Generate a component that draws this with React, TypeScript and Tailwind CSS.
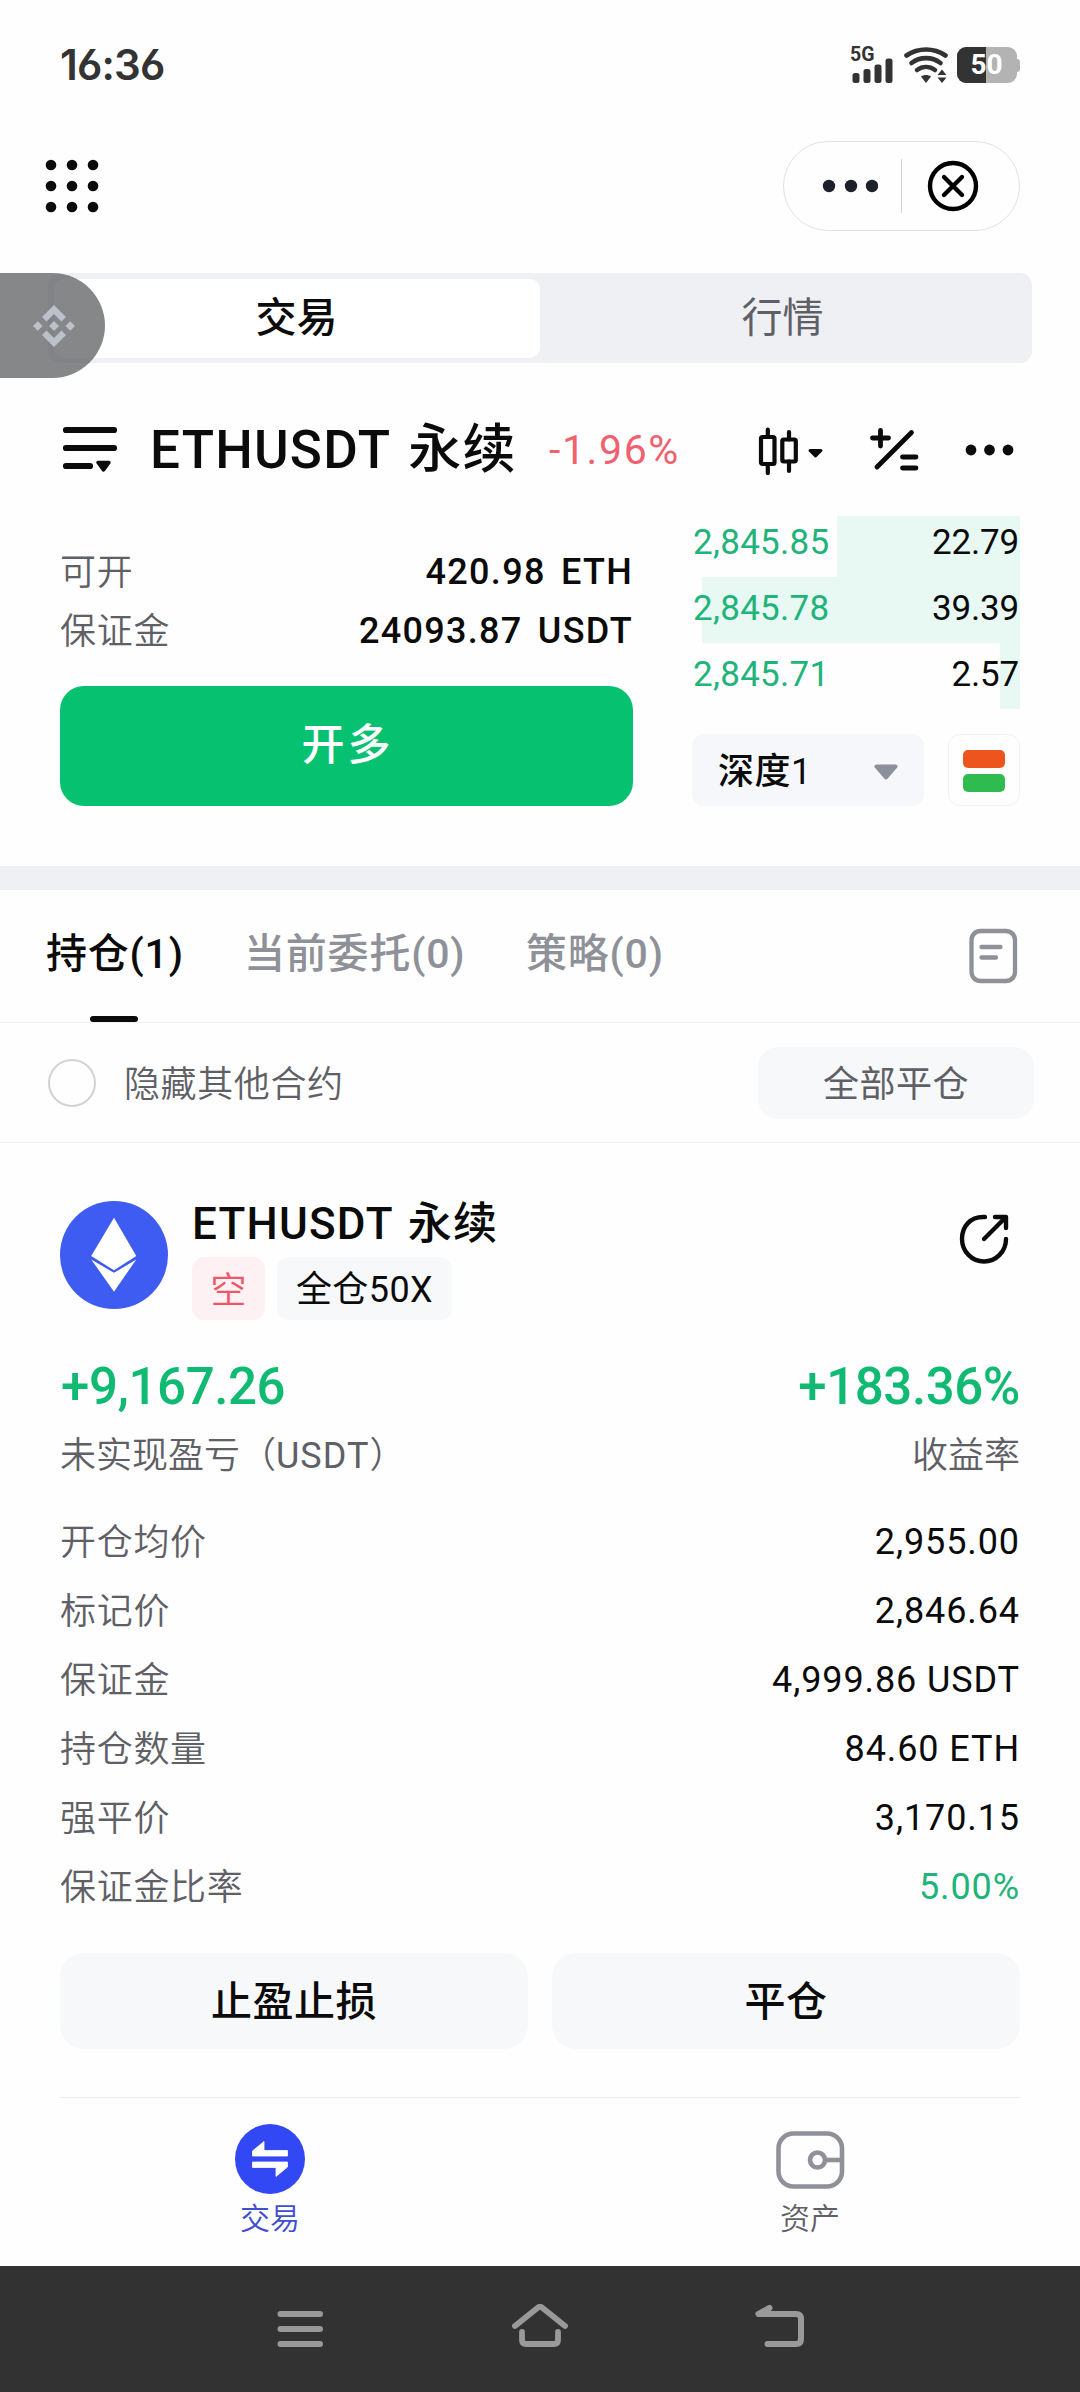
import type { ReactNode } from "react";

const bids = [
  { price: "2,845.85", amount: "22.79", bar: "w-[183px]" },
  { price: "2,845.78", amount: "39.39", bar: "w-[318px]" },
  { price: "2,845.71", amount: "2.57", bar: "w-[20px]" },
];

const details = [
  { label: "开仓均价", value: "2,955.00" },
  { label: "标记价", value: "2,846.64" },
  { label: "保证金", value: "4,999.86 USDT" },
  { label: "持仓数量", value: "84.60 ETH" },
  { label: "强平价", value: "3,170.15" },
  { label: "保证金比率", value: "5.00%", green: true },
];

// latin letters and figures
const latin = "font-['Roboto','Noto_Sans_CJK_SC',sans-serif]";

const StatusBar = () => (
  <div className="flex h-[130px] items-center justify-between pl-[60px] pr-[60px] text-[#333333]">
    <span className="text-[42px] leading-none font-semibold tracking-[-0.8px]">16:36</span>
    <div className="flex items-end">
      <div className="relative h-9 w-[46px]">
        <span className={`absolute top-0 left-0 text-[19.5px] leading-[15px] font-bold ${latin}`}>5G</span>
        <svg className="absolute inset-0" width="46" height="36" viewBox="0 0 46 36" fill="currentColor">
          <rect x="2.5" y="26" width="7" height="10" rx="2.5" />
          <rect x="13.5" y="22" width="7" height="14" rx="2.5" />
          <rect x="24.5" y="17.5" width="7" height="18.5" rx="2.5" />
          <rect x="35.5" y="11.5" width="7" height="24.5" rx="2.5" />
        </svg>
      </div>
      <svg className="ml-[8px]" width="44" height="36" viewBox="0 0 44 36" fill="none" stroke="currentColor" strokeWidth="4.6" strokeLinecap="round">
        <path d="M2.5 8.5C14 0.500 30 0.500 41.5 8.5" />
        <path d="M7.5 16C16 9.5 28 9.5 36.5 16" />
        <path d="M13 23C18.5 19 25.5 19 31 23" />
        <path d="M17 29.500C20 27.500 24 27.500 27 29.500L22 36Z" fill="currentColor" stroke="none" />
        <path d="M38 22.5L42.5 28H33.5ZM38 36L42.5 30.5H33.5Z" fill="currentColor" stroke="none" />
      </svg>
      <div className="relative ml-[9px] flex h-9 w-[63px] items-center">
        <div className="flex h-9 w-[60px] overflow-hidden rounded-[9px] bg-[#b3b3b3]">
          <div className="h-9 w-[29px] bg-[#333333]" />
        </div>
        <div className="h-[13px] w-[3px] rounded-r-sm bg-[#b3b3b3]" />
        <span className={`absolute left-0 w-[59px] text-center text-[28px] leading-9 font-bold ${latin} text-white`}>50</span>
      </div>
    </div>
  </div>
);

const AppHeader = () => (
  <div className="flex h-[112px] items-center justify-between pl-[45px] pr-[60px]">
    <svg width="54" height="54" viewBox="0 0 54 54" fill="#0b0b0b">
      {[6, 27, 48].map((y) => [6, 27, 48].map((x) => <circle key={`${x}-${y}`} cx={x} cy={y} r="5.3" />))}
    </svg>
    <div className="flex h-[90px] w-[237px] items-center rounded-full border border-[#e2e2e2]">
      <svg className="ml-[38px]" width="56" height="14" viewBox="0 0 56 14" fill="#1b202a">
        <circle cx="7" cy="7" r="6.2" />
        <circle cx="29" cy="7" r="6.2" />
        <circle cx="50" cy="7" r="6.2" />
      </svg>
      <div className="ml-[23px] h-[54px] w-px bg-[#d4d4d4]" />
      <svg className="ml-[25px]" width="52" height="52" viewBox="0 0 52 52" fill="none" stroke="#000000" strokeWidth="4.4" strokeLinecap="round">
        <circle cx="26" cy="26" r="23" />
        <path d="M17 17L35 35M35 17L17 35" />
      </svg>
    </div>
  </div>
);

const Segmented = () => (
  <div className="relative mt-[31px]">
    <div className="mx-12 flex h-[90px] rounded-xl bg-[#eff0f4] p-[5.5px] text-[41px] leading-none">
      <div className="flex w-[486px] items-center justify-center rounded-[10px] bg-white pb-[2px] font-medium text-[#0b0b0b]">交易</div>
      <div className="flex flex-1 items-center justify-center pr-px pb-[2px] text-[#5f6066]">行情</div>
    </div>
    <div className="absolute top-0 left-0 flex h-[105px] w-[105px] items-center rounded-r-full bg-[#5e5f62]/75">
      <svg className="ml-[33px]" width="42" height="42" viewBox="0 0 42 42" fill="#bcc0cb">
        <path d="M21 0L33 12L28.5 16.5L21 9L13.5 16.5L9 12Z" />
        <path d="M21 42L33 30L28.5 25.5L21 33L13.5 25.5L9 30Z" />
        <path d="M21 16L26 21L21 26L16 21Z" />
        <path d="M4.8 16.2L9.6 21L4.8 25.8L0 21Z" />
        <path d="M37.2 16.2L42 21L37.2 25.8L32.4 21Z" />
      </svg>
    </div>
  </div>
);

const PairHeader = () => (
  <div className="mt-[32px] flex h-[110px] items-center pl-[60px] text-[#0b0b0b]">
    <svg width="60" height="54" viewBox="0 0 60 54" fill="none" stroke="currentColor" strokeWidth="6.2" strokeLinecap="round">
      <path d="M6 7H54M6 25H54M6 43H30" />
      <path d="M38 39.5H49L43.5 47Z" fill="currentColor" strokeWidth="3.5" strokeLinejoin="round" />
    </svg>
    <span className={`ml-[30px] w-[363px] pt-px text-[53px] leading-none font-medium tracking-[1.2px] whitespace-nowrap [word-spacing:4px] ${latin}`}>
      ETHUSDT 永续
    </span>
    <span className={`ml-[36px] w-[150px] text-[41px] leading-none tracking-[1.6px] text-[#f0616f] ${latin}`}>-1.96%</span>
    <svg className="ml-[58px]" width="68" height="50" viewBox="0 0 68 50" fill="none" stroke="currentColor" strokeWidth="4.2" strokeLinecap="round">
      <rect x="4" y="12" width="13.5" height="27" rx="1.5" />
      <path d="M10.8 4.5V12M10.8 39V48" />
      <rect x="25.3" y="14.5" width="13.5" height="22" rx="1.5" />
      <path d="M32 7V14.5M32 36.5V46" />
      <path d="M53 25.5H64L58.5 31Z" fill="currentColor" strokeWidth="3" strokeLinejoin="round" />
    </svg>
    <svg className="ml-[43px]" width="52" height="50" viewBox="0 0 52 50" fill="none" stroke="currentColor" strokeWidth="4.8" strokeLinecap="round">
      <path d="M4.5 13H20.5M12.5 5.5V21" />
      <path d="M9 42L43.5 7.5" />
      <path d="M34.5 32H48M34.5 43H48" />
    </svg>
    <svg className="ml-[44px]" width="50" height="12" viewBox="0 0 50 12" fill="currentColor">
      <circle cx="7" cy="6" r="5.4" />
      <circle cx="25.5" cy="6" r="5.4" />
      <circle cx="44" cy="6" r="5.4" />
    </svg>
  </div>
);

const TradePanel = () => (
  <div className="mt-[11px] flex h-[350px] px-[60px]">
    <div className="w-[573px] pt-[26px] text-[36px]">
      <div className="flex h-[59px] items-center justify-between leading-none">
        <span className="font-[350] tracking-[0.7px] text-[#5f6066]">可开</span>
        <span className={`font-medium tracking-[1.3px] text-[#0b0b0b] [word-spacing:5px] ${latin}`}>420.98 ETH</span>
      </div>
      <div className="flex h-[59px] items-center justify-between pt-px leading-none">
        <span className="font-[350] tracking-[0.7px] text-[#5f6066]">保证金</span>
        <span className={`font-medium tracking-[1.3px] text-[#0b0b0b] [word-spacing:5px] ${latin}`}>24093.87 USDT</span>
      </div>
      <div className="mt-[26px] flex h-[120px] items-center justify-center rounded-3xl bg-[#06c270] pb-[4px] pl-[2px] text-[43px] leading-none font-medium tracking-[3px] text-white">
        开多
      </div>
    </div>
    <div className="ml-[59px] flex-1">
      {bids.map((bid) => (
        <div key={bid.price} className={`relative flex h-[66px] items-center justify-between pr-px pl-[1px] text-[35px] leading-none first:h-[61px] first:pb-[8px] not-first:pb-[3px] ${latin}`}>
          <div className={`absolute top-0 right-0 h-full bg-[#e8f8f2] ${bid.bar}`} />
          <span className="relative font-[450] tracking-[0.3px] text-[#21b47a]">{bid.price}</span>
          <span className="relative font-[450] tracking-[-0.2px] text-[#0b0b0b]">{bid.amount}</span>
        </div>
      ))}
      <div className="mt-[25px] flex justify-between">
        <div className="flex h-[72px] w-[232px] items-center justify-between rounded-xl bg-[#f6f7fa] pr-[26px] pl-[26px] text-[36px] leading-none text-[#0b0b0b]">
          <span className={`pt-[4px] font-[450] tracking-[0.5px] ${latin}`}>深度1</span>
          <svg className="mt-[3px]" width="24" height="16" viewBox="0 0 24 16" fill="#8c909d" stroke="#8c909d" strokeWidth="4" strokeLinejoin="round">
            <path d="M2.5 2.5H21.5L12 13.5Z" />
          </svg>
        </div>
        <div className="flex h-[72px] w-[72px] flex-col items-center justify-center gap-[6px] rounded-xl border border-[#f2f2f4] pt-[2px]">
          <div className="h-[18px] w-[42px] rounded-[5px] bg-[#ee541d]" />
          <div className="h-[18px] w-[42px] rounded-[5px] bg-[#2fbb4f]" />
        </div>
      </div>
    </div>
  </div>
);

const PositionTabs = () => (
  <>
    <div className={`flex h-[133px] items-center border-b border-[#eeeff2] pl-[46px] text-[41px] leading-none font-medium tracking-[0.8px] text-[#8f9198] ${latin}`}>
      <div className="relative flex h-full w-[198px] items-center pb-[3px] text-[#0b0b0b]">
        持仓(1)
        <div className="absolute bottom-0 left-[44px] h-[6px] w-12 rounded-full bg-[#0b0b0b]" />
      </div>
      <div className="w-[282px] pb-[3px]">当前委托(0)</div>
      <div className="pb-[3px]">策略(0)</div>
      <svg className="mr-[62px] ml-auto" width="50" height="56" viewBox="0 0 50 56" fill="none" stroke="#8f9198" strokeWidth="4.3" strokeLinecap="round">
        <rect x="3.5" y="3" width="43.5" height="50" rx="9" />
        <path d="M13.5 19H32.5M13.5 29.5H28" />
      </svg>
    </div>
    <div className="flex h-[120px] items-center border-b border-[#eeeff2] pr-[46px] pl-12 text-[36px] leading-none text-[#5f6066]">
      <div className="h-[48px] w-[48px] rounded-full border-[2.5px] border-[#d2d2d2]" />
      <span className="ml-[28px] pt-[2px] font-[350] tracking-[0.6px]">隐藏其他合约</span>
      <div className="ml-auto flex h-[72px] w-[276px] items-center justify-center rounded-[20px] bg-[#f7f8fa] pt-[2px] tracking-[0.5px]">全部平仓</div>
    </div>
  </>
);

const EthLogo = () => (
  <svg width="108" height="108" viewBox="0 0 109 109">
    <circle cx="54.5" cy="54.5" r="54.5" fill="#3e5bf2" />
    <path d="M54.5 17L77 55.5L54.5 70L31.5 55.5Z" fill="#ffffff" />
    <path d="M31.5 59L54.5 72.5L77 59L54.5 91.5Z" fill="#ffffff" />
  </svg>
);

const PositionCard = () => (
  <div className="px-[60px] pt-[58px]">
    <div className="flex h-[150px]">
      <EthLogo />
      <div className="ml-[24px]">
        <div className={`h-[56px] pt-px text-[44px] leading-[44px] font-medium tracking-[1.2px] text-[#0b0b0b] [word-spacing:3px] ${latin}`}>
          ETHUSDT 永续
        </div>
        <div className="flex gap-3 text-[36px] leading-none font-[350]">
          <div className="flex h-[63px] w-[73px] items-center justify-center rounded-xl bg-[#fef1f3] pt-[2px] text-[#ee5768]">空</div>
          <div className={`flex h-[63px] w-[175px] items-center justify-center rounded-xl bg-[#f6f8f9] pt-[3px] font-normal tracking-[0.4px] text-[#0b0b0b] ${latin}`}>全仓50X</div>
        </div>
      </div>
      <svg className="mt-[11px] mr-[11px] ml-auto" width="52" height="54" viewBox="0 0 52 54" fill="none" stroke="#0b0b0b" strokeWidth="4.4" strokeLinecap="round" strokeLinejoin="round">
        <path d="M28 5C13 4 5 15 5 27A22 22.5 0 0 0 49 27" />
        <path d="M27 27L48 6M38 5H49V16" />
      </svg>
    </div>
    <div className={`flex h-[70px] items-center justify-between pt-px pl-px text-[51px] leading-none font-medium tracking-[-0.4px] text-[#10ba72] ${latin}`}>
      <span>+9,167.26</span>
      <span>+183.36%</span>
    </div>
    <div className="flex h-[68px] items-center justify-between text-[36px] leading-none font-[350] text-[#5f6066]">
      <span>
        未实现盈亏（<span className={`font-normal tracking-[1px] ${latin}`}>USDT</span>）
      </span>
      <span>收益率</span>
    </div>
    <div className="mt-[18px]">
      {details.map((item) => (
        <div key={item.label} className="flex h-[69px] items-center justify-between text-[36px] leading-none">
          <span className="font-[350] tracking-[0.7px] text-[#5f6066]">{item.label}</span>
          <span className={`tracking-[0.9px] ${latin} ${item.green ? "text-[#21b47a]" : "text-[#0b0b0b]"}`}>{item.value}</span>
        </div>
      ))}
    </div>
    <div className="mt-[32px] grid grid-cols-2 gap-6 text-[41px] leading-none font-medium tracking-[0.5px] text-[#0b0b0b]">
      <div className="flex h-24 items-center justify-center rounded-3xl bg-[#f7f8fa]">止盈止损</div>
      <div className="flex h-24 items-center justify-center rounded-3xl bg-[#f7f8fa]">平仓</div>
    </div>
    <div className="mt-12 h-px bg-[#ececee]" />
  </div>
);

const NavItem = ({ icon, label, className }: { icon: ReactNode; label: string; className: string }) => (
  <div className={`flex flex-1 flex-col items-center ${className}`}>
    {icon}
    <span className="mt-[5px] text-[30px] leading-[38px] font-[350]">{label}</span>
  </div>
);

const BottomNav = () => (
  <div className="flex h-[168px] pt-[26px]">
    <NavItem
      label="交易"
      className="text-[#3f4fd0]"
      icon={
        <svg width="70" height="70" viewBox="0 0 70 70">
          <circle cx="35" cy="35" r="35" fill="#3248f4" />
          <path d="M17.5 27L29 17.5V26.5H52.5V32H17.5ZM52.5 43L41 52.5V43.5H17.5V38H52.5Z" fill="#ffffff" stroke="#ffffff" strokeWidth="0.8" strokeLinejoin="round" />
        </svg>
      }
    />
    <NavItem
      label="资产"
      className="text-[#5f6066]"
      icon={
        <svg width="70" height="70" viewBox="0 0 70 70" fill="none" stroke="#8f9198" strokeWidth="4.6">
          <rect x="3.5" y="9.5" width="63.5" height="53" rx="15" />
          <circle cx="42.5" cy="36" r="7.5" />
          <path d="M50 36H67" />
        </svg>
      }
    />
  </div>
);

const SystemBar = () => (
  <div className="flex h-[126px] items-center justify-center gap-[184px] bg-[#323232]">
    <svg width="56" height="50" viewBox="0 0 56 50" fill="none" stroke="#999999" strokeWidth="6" strokeLinecap="round">
      <path d="M8.5 10H48M8.5 25H48M8.5 40H48" />
    </svg>
    <svg width="56" height="50" viewBox="0 0 56 50" fill="none" stroke="#999999" strokeWidth="5.8" strokeLinecap="round" strokeLinejoin="round">
      <path d="M3 22L26 3.5Q28 2 30 3.5L53 22" />
      <path d="M10 28V36Q10 40 14 40H42Q46 40 46 36V28" />
    </svg>
    <svg width="56" height="50" viewBox="0 0 56 50" fill="none" stroke="#999999" strokeWidth="6" strokeLinecap="round" strokeLinejoin="round">
      <path d="M17.5 4L6.5 10H44Q49 10 49 15V35Q49 40 44 40H15.5" />
    </svg>
  </div>
);

const App = () => {
  return (
    <div className="h-[2392px] w-[1080px] overflow-hidden bg-[#fefefe] font-['Inter','Noto_Sans_CJK_SC',sans-serif] [font-feature-settings:'cv03','cv04']">
      <StatusBar />
      <AppHeader />
      <Segmented />
      <PairHeader />
      <TradePanel />
      <div className="h-6 bg-[#eff0f3]" />
      <PositionTabs />
      <PositionCard />
      <BottomNav />
      <SystemBar />
    </div>
  );
};

export default App;
